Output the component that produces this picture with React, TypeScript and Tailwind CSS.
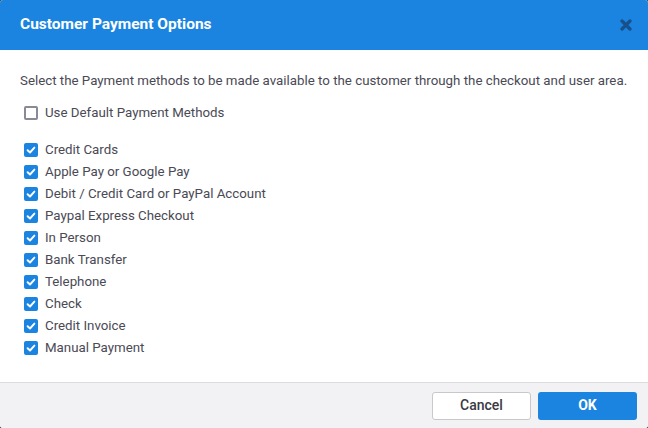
import React, { useState } from 'react';

const methods = [
  'Credit Cards',
  'Apple Pay or Google Pay',
  'Debit / Credit Card or PayPal Account',
  'Paypal Express Checkout',
  'In Person',
  'Bank Transfer',
  'Telephone',
  'Check',
  'Credit Invoice',
  'Manual Payment',
];

const Box = ({ checked }: { checked: boolean }) =>
  checked ? (
    <span className="w-[14px] h-[14px] rounded-[2px] bg-[#1a84e0] flex items-center justify-center shrink-0">
      <svg width="10" height="10" viewBox="0 0 10 10">
        <path d="M1.6 5.2 L4 7.5 L8.4 2.6" fill="none" stroke="white" strokeWidth="1.9" strokeLinecap="round" strokeLinejoin="round" />
      </svg>
    </span>
  ) : (
    <span className="w-[14px] h-[14px] rounded-[2px] border-2 border-[#8a8a94] bg-white shrink-0" />
  );

const Row = ({ label, checked, onToggle }: { label: string; checked: boolean; onToggle: () => void }) => (
  <label className="flex items-center h-[22px] gap-[7px] cursor-pointer" onClick={onToggle}>
    <Box checked={checked} />
    <span>{label}</span>
  </label>
);

export default function App() {
  const [useDefault, setUseDefault] = useState(false);
  const [enabled, setEnabled] = useState<boolean[]>(methods.map(() => true));

  return (
    <div className="w-[648px] h-[428px] bg-[#3a3a3a] font-['Roboto',sans-serif]">
      <div className="w-full h-full rounded-[3px] overflow-hidden bg-white flex flex-col">
        {/* Header */}
        <div className="h-[50px] bg-[#1a84e0] flex items-center justify-between pl-5 pr-4 shrink-0">
          <h1 className="text-white font-bold text-[15.5px]">Customer Payment Options</h1>
          <svg width="12" height="12" viewBox="0 0 12 12">
            <path d="M2 2 L10 10 M10 2 L2 10" stroke="#17508a" strokeWidth="3.2" strokeLinecap="round" />
          </svg>
        </div>

        {/* Body */}
        <div className="flex-1 pl-5 pr-2 pt-[22px] text-[13.3px] text-[#4a4a55]">
          <p className="leading-[18px] whitespace-nowrap">
            Select the Payment methods to be made available to the customer through the checkout and user area.
          </p>
          <div className="mt-[12px] pl-1">
            <Row label="Use Default Payment Methods" checked={useDefault} onToggle={() => setUseDefault(!useDefault)} />
          </div>
          <div className="mt-[15px] pl-1 flex flex-col">
            {methods.map((m, i) => (
              <Row
                key={m}
                label={m}
                checked={enabled[i]}
                onToggle={() => setEnabled(enabled.map((v, j) => (j === i ? !v : v)))}
              />
            ))}
          </div>
        </div>

        {/* Footer */}
        <div className="h-[46px] shrink-0 border-t border-[#dcdce0] bg-[#f2f2f4] flex items-center justify-end gap-[7px] pr-[11px]">
          <button className="w-[99px] h-[28px] rounded-[3px] border border-[#c8c8cc] bg-white text-[#3a3a45] text-[14px] font-medium">
            Cancel
          </button>
          <button className="w-[99px] h-[28px] rounded-[3px] bg-[#1a84e0] text-white text-[14px] font-bold">
            OK
          </button>
        </div>
      </div>
    </div>
  );
}
